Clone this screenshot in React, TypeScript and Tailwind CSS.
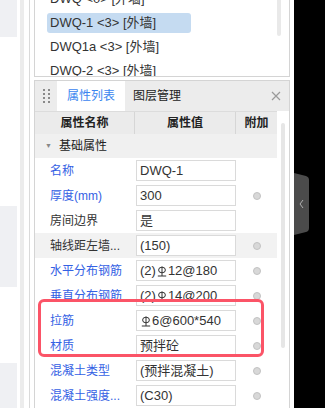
const font = "font-['Liberation_Sans','Noto_Sans_CJK_SC',sans-serif]"

function Rebar() {
  return (
    <svg width="10" height="11" viewBox="0 0 10 11" className="inline-block mx-[1px]">
      <ellipse cx="5" cy="4" rx="3.4" ry="2.8" fill="none" stroke="#333" strokeWidth="1" />
      <line x1="5" y1="0.5" x2="5" y2="10" stroke="#333" strokeWidth="1" />
      <line x1="0.8" y1="10" x2="9.2" y2="10" stroke="#333" strokeWidth="1" />
    </svg>
  )
}

type Row = { label: string; value: React.ReactNode; blue: boolean; dot: boolean; gray?: boolean }

const rows: Row[] = [
  { label: '名称', value: 'DWQ-1', blue: true, dot: false },
  { label: '厚度(mm)', value: '300', blue: true, dot: true },
  { label: '房间边界', value: '是', blue: false, dot: false },
  { label: '轴线距左墙...', value: '(150)', blue: false, dot: true, gray: true },
  { label: '水平分布钢筋', value: <>(2)<Rebar />12@180</>, blue: true, dot: true },
  { label: '垂直分布钢筋', value: <>(2)<Rebar />14@200</>, blue: true, dot: true },
  { label: '拉筋', value: <><Rebar />6@600*540</>, blue: true, dot: true },
  { label: '材质', value: '预拌砼', blue: true, dot: true },
  { label: '混凝土类型', value: '(预拌混凝土)', blue: true, dot: true },
  { label: '混凝土强度...', value: '(C30)', blue: true, dot: true },
]

const listItems = ['DWQ <0> [外墙]', 'DWQ-1 <3> [外墙]', 'DWQ1a <3> [外墙]', 'DWQ-2 <3> [外墙]']

export default function App() {
  return (
    <div className={`relative w-[325px] h-[408px] overflow-hidden bg-white flex text-[12px] text-[#333] ${font}`}>
      {/* left edge */}
      <div className="w-[17px] flex flex-col">
        <div className="h-[37px] bg-[#eff0f3]" />
        <div className="h-[169px]" />
        <div className="h-[81px] bg-[#eff0f3]" />
        <div className="h-[76px]" />
        <div className="flex-1 bg-[#eff0f3]" />
      </div>
      <div className="w-[3px]" />
      <div className="w-[4px] bg-[#ececec]" />
      <div className="w-[5px]" />
      <div className="w-px bg-[#dadada]" />
      <div className="w-[4px]" />

      {/* main column */}
      <div className="w-[256px] flex flex-col">
        {/* component list */}
        <div className="relative h-[77px] border-l border-r border-b border-[#d4d4d4] overflow-hidden">
          <div className="-mt-[13px] flex flex-col">
            {listItems.map((t, i) => (
              <div key={t} className="h-[24px] flex items-center pl-[12px]">
                <div
                  className={`h-[20px] w-[144px] flex items-center pl-[3px] rounded-[3px] text-[13px] whitespace-pre ${
                    i === 1 ? 'bg-[#c5dbf1]' : ''
                  }`}
                >
                  {t}
                </div>
              </div>
            ))}
          </div>
          <div className="absolute right-[8px] top-0 w-[4px] h-[36px] rounded-b-full bg-[#e9e9e9]" />
        </div>
        <div className="h-[3px]" />

        {/* properties panel */}
        <div className="flex-1 min-h-0 border-l border-r border-t border-[#d4d4d4] flex flex-col">
          <div className="h-[30px] bg-[#ececec] flex items-stretch">
            <div className="w-[22px] flex items-center justify-center">
              <div className="grid grid-cols-2 gap-x-[3px] gap-y-[2px]">
                {Array.from({ length: 8 }).map((_, i) => (
                  <div key={i} className="w-[2px] h-[2px] bg-[#8a8a8a]" />
                ))}
              </div>
            </div>
            <div className="w-[68px] bg-white flex items-center justify-center text-[12px] text-[#3b86f0]">
              属性列表
            </div>
            <div className="w-[64px] flex items-center justify-center text-[12px] text-[#222]">图层管理</div>
            <div className="flex-1 flex items-center justify-end pr-[8px]">
              <svg width="10" height="10" viewBox="0 0 10 10">
                <path d="M1 1L9 9M9 1L1 9" stroke="#9a9a9a" strokeWidth="1.2" />
              </svg>
            </div>
          </div>

          <div className="flex-1 min-h-0 flex">
            <div className="w-[242px] flex flex-col">
              {/* header */}
              <div className="h-[24px] bg-[#ebebeb] border-t border-[#dcdcdc] flex text-[12px] font-bold text-[#222]">
                <div className="w-[100px] flex items-center justify-center border-r border-[#d6d6d6]">属性名称</div>
                <div className="w-[101px] flex items-center justify-center border-r border-[#d6d6d6]">属性值</div>
                <div className="flex-1 flex items-center justify-center">附加</div>
              </div>
              {/* group */}
              <div className="h-[25px] bg-[#f0f0f0] flex items-center pl-[10px] text-[12px] text-[#222]">
                <span className="text-[7px] text-[#888] mr-[7px]">▼</span>
                基础属性
              </div>
              {rows.map((r) => (
                <div key={r.label} className={`h-[25px] flex items-center shrink-0 ${r.gray ? 'bg-[#f2f2f2]' : ''}`}>
                  <div
                    className={`w-[100px] pl-[15px] text-[12px] whitespace-nowrap ${
                      r.blue ? 'text-[#3461e4]' : 'text-[#333]'
                    }`}
                  >
                    {r.label}
                  </div>
                  <div className="w-[101px] pl-px">
                    <div className="w-[100px] h-[21px] border border-[#dadada] bg-white flex items-center pl-[3px] text-[13px] text-[#333] whitespace-nowrap">
                      <span>{r.value}</span>
                    </div>
                  </div>
                  <div className="flex-1 flex items-center justify-center">
                    {r.dot && <div className="w-[8px] h-[8px] rounded-full bg-[#d8d8d8] border border-[#c2c2c2]" />}
                  </div>
                </div>
              ))}
            </div>
            <div className="flex-1 pl-[4px] pt-[12px]">
              <div className="w-[4px] h-[225px] rounded-full bg-[#e6e6e6]" />
            </div>
          </div>
        </div>
      </div>

      <div className="w-[4px]" />
      <div className="relative flex-1 bg-black">
        <svg width="16" height="64" viewBox="0 0 16 64" className="absolute left-0 top-[172px]">
          <path d="M0 1L12 4Q15 5 15 8L15 56Q15 59 12 60L0 63Z" fill="#4b4b4b" />
          <path d="M9 28L6 32L9 36" fill="none" stroke="#b0b0b0" strokeWidth="1" />
        </svg>
      </div>

      {/* highlight box */}
      <div className="absolute left-[38px] top-[299px] w-[226px] h-[58px] border-[3px] border-[#fb5467] rounded-[6px]" />
    </div>
  )
}
